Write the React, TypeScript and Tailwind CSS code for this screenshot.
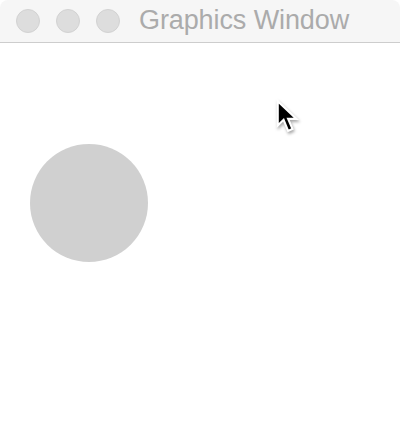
import React from "react";

export default function App() {
  return (
    <div className="w-[400px] h-[444px] bg-white overflow-hidden" style={{ fontFamily: '"Liberation Sans", Arial, sans-serif' }}>
      <div className="h-[43px] bg-[#f6f6f6] border-b border-[#cdcdcd] rounded-t-[8px] flex items-center pl-[16px]">
        <div className="flex gap-[16px] -mt-[1px]">
          <div className="w-[24px] h-[24px] rounded-full bg-[#dddddd] border border-[#d2d2d2]" />
          <div className="w-[24px] h-[24px] rounded-full bg-[#dddddd] border border-[#d2d2d2]" />
          <div className="w-[24px] h-[24px] rounded-full bg-[#dddddd] border border-[#d2d2d2]" />
        </div>
        <div className="ml-[19px] text-[27px] leading-none text-[#ababab] -mt-[1px] tracking-[-0.1px]">Graphics Window</div>
      </div>
      <div className="relative h-[401px]">
        <div className="absolute left-[30px] top-[101px] w-[118px] h-[118px] rounded-full bg-[#d0d0d0]" />
        <svg
          className="absolute left-[274px] top-[55px]"
          width="30"
          height="40"
          viewBox="0 0 20 26"
          style={{ filter: "drop-shadow(1px 2px 1.5px rgba(0,0,0,0.35))" }}
        >
          <path
            d="M2.5 1.8 L2.5 18 L6.4 14.2 L9.4 21.6 L12.3 20.3 L9.4 13.6 L15 13.6 Z"
            fill="#000"
            stroke="#fff"
            strokeWidth="1.4"
            strokeLinejoin="miter"
          />
        </svg>
      </div>
    </div>
  );
}
